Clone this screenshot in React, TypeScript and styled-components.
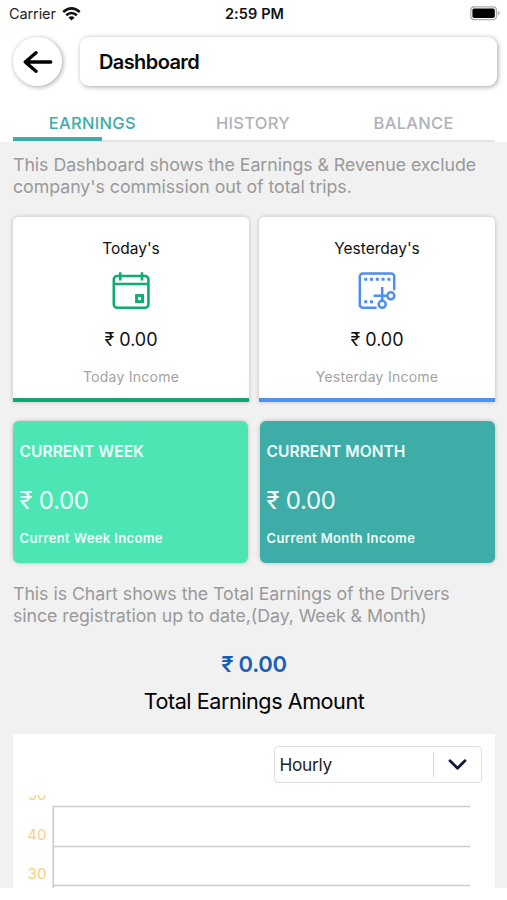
import React from "react";
import styled, { createGlobalStyle } from "styled-components";

const GlobalStyle = createGlobalStyle`
  * { box-sizing: border-box; }
  body {
    margin: 0;
    background: #fff;
    font-family: Inter, "Liberation Sans", sans-serif;
    color: #111;
  }
`;

const Screen = styled.div`
  width: 507px;
  height: 900px;
  overflow: hidden;
  background: #fff;
`;

const StatusBar = styled.div`
  display: grid;
  grid-template-columns: 1fr auto 1fr;
  align-items: center;
  height: 27px;
  padding: 0 7px 0 9px;
`;

const Carrier = styled.div`
  display: flex;
  align-items: center;
  gap: 6px;
  font-size: 14.5px;
  letter-spacing: -0.1px;
  color: #222;
`;

const Clock = styled.div`
  font-size: 14.5px;
  font-weight: 600;
  letter-spacing: 0.1px;
  color: #111;
`;

const Battery = styled.svg`
  justify-self: end;
`;

const Header = styled.header`
  display: flex;
  gap: 18px;
  padding: 10px 10px 0 13px;
  height: 73px;
`;

const BackButton = styled.button`
  width: 49px;
  height: 49px;
  padding: 0;
  border: 0;
  border-radius: 50%;
  background: #fff;
  display: grid;
  place-items: center;
  box-shadow: 1px 1px 5px rgba(0, 0, 0, 0.36);
`;

const TitleBox = styled.h1`
  flex: 1;
  height: 49px;
  margin: 0;
  padding-left: 19px;
  display: flex;
  align-items: center;
  border-radius: 9px;
  background: #fff;
  box-shadow: 1px 1px 5px rgba(0, 0, 0, 0.36);
  font-size: 20px;
  font-weight: 600;
  letter-spacing: -0.6px;
  color: #0a0a0a;
`;

const Tabs = styled.nav`
  display: grid;
  grid-template-columns: repeat(3, 160.67px);
  margin: 0 12px 0 13px;
  height: 42px;
  border-bottom: 2px solid #e4e4e4;
`;

const Tab = styled.div<{ $active?: boolean }>`
  display: flex;
  align-items: center;
  justify-content: center;
  position: relative;
  padding: 7px 2px 1px 0;
  font-size: 16.5px;
  font-weight: 500;
  letter-spacing: 0.3px;
  color: ${(p) => (p.$active ? "#3eada7" : "#b0b1b8")};
`;

const TabIndicator = styled.span`
  position: absolute;
  left: 0;
  bottom: -1px;
  width: 89px;
  height: 4px;
  background: #3eada7;
`;

const Body = styled.main`
  height: 746px;
  padding: 12px 12px 0 13px;
  background: #f1f1f1;
  display: flex;
  flex-direction: column;
  overflow: hidden;
`;

const Note = styled.p`
  margin: 0;
  height: 63px;
  flex: none;
  font-size: 17.8px;
  line-height: 22px;
  letter-spacing: -0.06px;
  white-space: pre-line;
  color: #999;
`;

const CardRow = styled.div<{ $gap: number }>`
  display: grid;
  grid-template-columns: 1fr 1fr;
  gap: ${(p) => p.$gap}px;
  flex: none;
`;

const DayCard = styled.section<{ $accent: string }>`
  height: 185px;
  border-radius: 5px 5px 0 0;
  border-bottom: 4px solid ${(p) => p.$accent};
  background: #fff;
  box-shadow: 0 0 4px rgba(0, 0, 0, 0.22);
  display: flex;
  flex-direction: column;
  align-items: center;
  padding-top: 21px;
`;

const DayName = styled.div`
  font-size: 15.5px;
  line-height: 20px;
  padding-top: 1px;
  height: 34px;
`;

const DayAmount = styled.div`
  margin-top: 19px;
  font-size: 18px;
  line-height: 22px;
  letter-spacing: 0;
`;

const DayCaption = styled.div`
  margin-top: 17px;
  font-size: 14px;
  line-height: 18px;
  letter-spacing: 0.25px;
  color: #a2a2a2;
`;

const PeriodCard = styled.section<{ $color: string }>`
  height: 142px;
  padding: 21px 0 0 6.5px;
  border-radius: 6px;
  background: ${(p) => p.$color};
  box-shadow: 0 0 4px rgba(0, 0, 0, 0.22);
  color: #f0fffc;
`;

const PeriodName = styled.div`
  font-size: 15.6px;
  font-weight: 600;
  line-height: 20px;
`;

const PeriodAmount = styled.div`
  margin-top: 24px;
  font-size: 24px;
  line-height: 30px;
  letter-spacing: -0.3px;
`;

const PeriodCaption = styled.div`
  margin-top: 13px;
  font-size: 13px;
  font-weight: 600;
  line-height: 18px;
  letter-spacing: 0.37px;
`;

const Total = styled.div`
  flex: none;
  text-align: center;
  height: 88px;
  color: #000;
`;

const TotalAmount = styled.div`
  font-size: 22px;
  font-weight: 600;
  line-height: 28px;
  letter-spacing: -0.3px;
  color: #1560b9;
  padding-top: 4px;
`;

const TotalLabel = styled.div`
  margin-top: 8px;
  font-size: 21.6px;
  line-height: 30px;
  letter-spacing: -0.45px;
`;

const Panel = styled.section`
  flex: none;
  height: 154px;
  padding: 12px 13px 0 0;
  background: #fff;
  display: flex;
  flex-direction: column;
`;

const Select = styled.div`
  align-self: flex-end;
  width: 208.5px;
  height: 37px;
  flex: none;
  display: flex;
  align-items: center;
  border: 1.5px solid #dfdfdf;
  border-radius: 4px;
  padding-left: 5px;
  font-size: 17.3px;
  letter-spacing: -0.3px;
  color: #222;
`;

const SelectValue = styled.span`
  flex: 1;
`;

const SelectToggle = styled.span`
  width: 48.5px;
  height: 25px;
  border-left: 1px solid #dcdcdc;
  display: grid;
  place-items: center;
`;

const Chart = styled.svg`
  flex: none;
  margin-top: 12px;
  display: block;
`;

const AxisLabel = styled.text`
  font-size: 15px;
  fill: #fad080;
  text-anchor: end;
`;

const WifiIcon = () => (
  <svg width="19" height="14" viewBox="0 0 19 14">
    <g fill="none" stroke="#111" strokeWidth="2.5">
      <path d="M1.2 5 Q9.5 -2.2 17.8 5" />
      <path d="M4.2 8.3 Q9.5 3.6 14.8 8.3" />
    </g>
    <path d="M6.4 10.4 Q9.5 7.9 12.6 10.4 L9.5 13.6Z" fill="#111" />
  </svg>
);

const BatteryIcon = () => (
  <Battery width="30" height="15" viewBox="0 0 30 15">
    <rect x="0.8" y="0.8" width="25.6" height="12.8" rx="3.4" fill="#fff" stroke="#aaa" strokeWidth="1.2" />
    <rect x="2.4" y="2.4" width="22.4" height="9.6" rx="1.8" fill="#000" />
    <path d="M27.8 5v4.4q1.8-.6 1.8-2.2t-1.8-2.2" fill="#aaa" />
  </Battery>
);

const BackArrow = () => (
  <svg width="30" height="24" viewBox="0 0 30 24" fill="none" stroke="#000" strokeWidth="3.4" strokeLinecap="round" strokeLinejoin="round">
    <path d="M27.7 12H2.3M13 2.8 2.3 12 13 21.2" />
  </svg>
);

const CalendarIcon = () => (
  <svg width="38" height="38" viewBox="0 0 38 38" fill="none" stroke="#0fac70" strokeWidth="2.6">
    <rect x="1.8" y="4" width="34.6" height="31.8" rx="3.4" />
    <path d="M1.8 12h34.6M8.2 .3v8.3M30 .3v8.3" />
    <rect x="24.6" y="23.6" width="6" height="6" strokeWidth="3" />
  </svg>
);

const CutIcon = () => (
  <svg width="38" height="38" viewBox="0 0 38 38" fill="none" stroke="#4d8ff0" strokeWidth="2.5">
    <path d="M18.6 35.7H4.8a3 3 0 0 1-3-3V4.5a3 3 0 0 1 3-3h28.4a3 3 0 0 1 3 3v13.7" />
    <path d="M6.2 7.2h27" strokeWidth="3" strokeDasharray="3 2.8" />
    <path d="M6.2 29.8h9" strokeWidth="3" strokeDasharray="3 2.8" />
    <path d="M24.2 15v13M15.6 23.8h12.8" />
    <circle cx="24.2" cy="32.3" r="3.5" />
    <circle cx="32.8" cy="23.8" r="3.5" />
  </svg>
);

const ChevronDown = () => (
  <svg width="20" height="12" viewBox="0 0 20 12" fill="none" stroke="#14163c" strokeWidth="2.8" strokeLinecap="round" strokeLinejoin="round">
    <path d="M3 1.7 10.5 9.2 18 1.7" />
  </svg>
);

const GRID_LINES = [
  { y: 11.5, label: "50", baseline: 5 },
  { y: 51.5, label: "40", baseline: 44.5 },
  { y: 90.5, label: "30", baseline: 84 },
];

const days = [
  { name: "Today's", caption: "Today Income", accent: "#12a670", icon: <CalendarIcon /> },
  { name: "Yesterday's", caption: "Yesterday Income", accent: "#5090ee", icon: <CutIcon /> },
];

const periods = [
  { name: "CURRENT WEEK", caption: "Current Week Income", color: "#4be6b3" },
  { name: "CURRENT MONTH", caption: "Current Month Income", color: "#3eada7" },
];

const WeekRow = styled(CardRow)`
  margin: 19px 0 20px;
`;

export default function App() {
  return (
    <Screen>
      <GlobalStyle />
      <StatusBar>
        <Carrier>
          Carrier <WifiIcon />
        </Carrier>
        <Clock>2:59 PM</Clock>
        <BatteryIcon />
      </StatusBar>
      <Header>
        <BackButton aria-label="Back">
          <BackArrow />
        </BackButton>
        <TitleBox>Dashboard</TitleBox>
      </Header>
      <Tabs>
        <Tab $active>
          EARNINGS
          <TabIndicator />
        </Tab>
        <Tab>HISTORY</Tab>
        <Tab>BALANCE</Tab>
      </Tabs>
      <Body>
        <Note>
          {"This Dashboard shows the Earnings & Revenue exclude\ncompany's commission out of total trips."}
        </Note>
        <CardRow $gap={10}>
          {days.map((d) => (
            <DayCard key={d.name} $accent={d.accent}>
              <DayName>{d.name}</DayName>
              {d.icon}
              <DayAmount>₹ 0.00</DayAmount>
              <DayCaption>{d.caption}</DayCaption>
            </DayCard>
          ))}
        </CardRow>
        <WeekRow $gap={12}>
          {periods.map((p) => (
            <PeriodCard key={p.name} $color={p.color}>
              <PeriodName>{p.name}</PeriodName>
              <PeriodAmount>₹ 0.00</PeriodAmount>
              <PeriodCaption>{p.caption}</PeriodCaption>
            </PeriodCard>
          ))}
        </WeekRow>
        <Note>
          {"This is Chart shows the Total Earnings of the Drivers\nsince registration up to date,(Day, Week & Month)"}
        </Note>
        <Total>
          <TotalAmount>₹ 0.00</TotalAmount>
          <TotalLabel>Total Earnings Amount</TotalLabel>
        </Total>
        <Panel>
          <Select>
            <SelectValue>Hourly</SelectValue>
            <SelectToggle>
              <ChevronDown />
            </SelectToggle>
          </Select>
          <Chart width="469" height="93" viewBox="0 0 469 93">
            {GRID_LINES.map((line) => (
              <g key={line.label}>
                <AxisLabel x="33.5" y={line.baseline}>
                  {line.label}
                </AxisLabel>
                <path d={`M40 ${line.y}H457`} stroke="#ccc" strokeWidth="1.4" />
              </g>
            ))}
            <path d="M40.3 11V93" stroke="#ccc" strokeWidth="1.6" />
          </Chart>
        </Panel>
      </Body>
    </Screen>
  );
}
